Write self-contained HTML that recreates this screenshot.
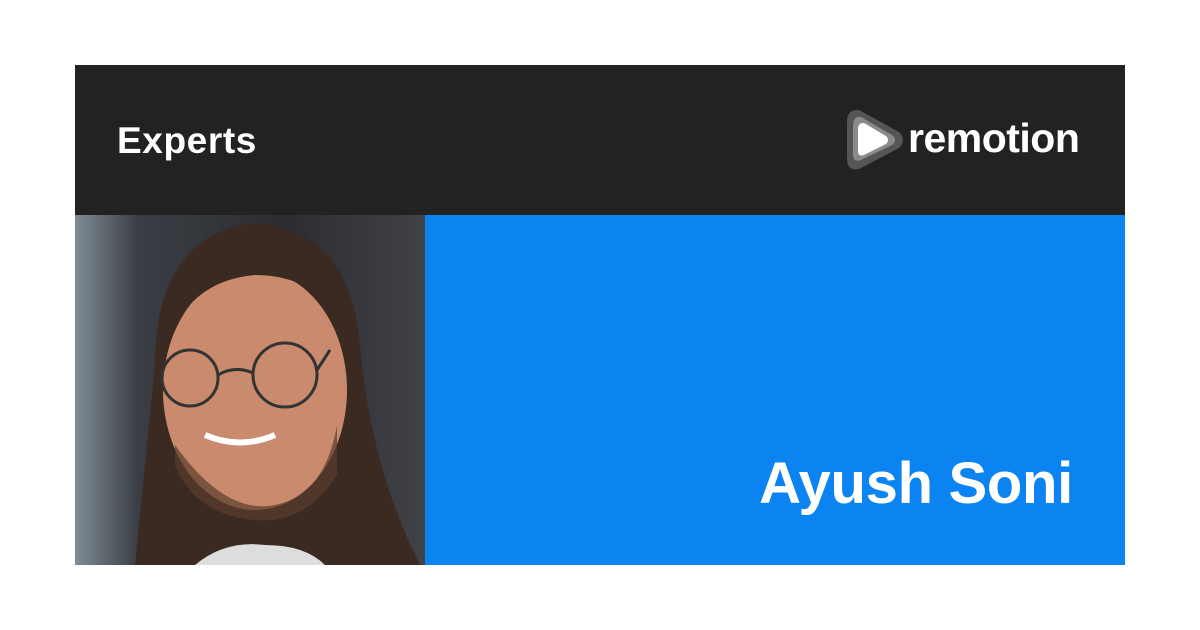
<!DOCTYPE html>
<html><head><style>
*{margin:0;padding:0}
body{width:1200px;height:630px;background:#fff;position:relative;overflow:hidden;font-family:"Liberation Sans",sans-serif}
#top{position:absolute;left:75px;top:65px;width:1050px;height:150px;background:#222}
#exp{position:absolute;left:117px;top:120px;color:#fff;font-weight:bold;font-size:37px;letter-spacing:0.6px}
#photo{position:absolute;left:75px;top:215px;width:350px;height:350px;overflow:hidden;background:linear-gradient(90deg,#7f8c95 0%,#3a3e44 18%,#2c2d31 60%,#404248 100%)}
#blue{position:absolute;left:425px;top:215px;width:700px;height:350px;background:#0b84f2}
#name{position:absolute;right:127px;top:450px;color:#fff;font-weight:bold;font-size:58px;letter-spacing:-0.3px}
#rt{position:absolute;left:908px;top:115px;color:#fff;font-weight:bold;font-size:41px;letter-spacing:-0.5px}
</style></head><body>
<div id="top"></div>
<div id="exp">Experts</div>
<svg style="position:absolute;left:845px;top:108px" width="62" height="64" viewBox="0 0 62 64">
<path d="M12 2 Q2 2 2 14 L2 50 Q2 64 14 61 L54 40 Q62 32 54 24 L14 2 Z" fill="#555"/>
<path d="M14 9 Q8 9 8 18 L8 46 Q8 55 16 52 L47 37 Q53 32 47 27 L16 9 Z" fill="#8a8a8a"/>
<path d="M18 15 Q13 15 13 21 L13 43 Q13 49 19 47 L41 36 Q45 32 41 28 L19 15 Z" fill="#fff"/>
</svg>
<div id="rt">remotion</div>
<div id="photo">
<svg width="350" height="350" viewBox="0 0 350 350">
<path d="M60 350 Q70 250 80 150 Q80 20 180 8 Q275 15 285 130 Q295 250 345 350 Z" fill="#3a2a22"/>
<ellipse cx="180" cy="175" rx="92" ry="120" fill="#c98a6e"/>
<path d="M95 120 Q110 30 190 30 Q260 35 270 110 Q240 60 180 60 Q120 65 95 120Z" fill="#3a2a22"/>
<path d="M100 230 Q150 300 200 290 Q250 280 262 210 L262 260 Q230 310 180 305 Q120 300 100 250Z" fill="#5a3d2c" opacity=".7"/>
<circle cx="115" cy="163" r="28" fill="none" stroke="#333" stroke-width="3"/>
<circle cx="210" cy="160" r="32" fill="none" stroke="#333" stroke-width="3"/>
<path d="M143 160 Q160 150 178 158 M242 155 L255 135" stroke="#333" stroke-width="3" fill="none"/>
<path d="M130 220 Q165 235 200 220" stroke="#fff" stroke-width="6" fill="none"/>
<path d="M120 350 Q150 325 190 330 Q230 330 250 350Z" fill="#ddd"/>
</svg>
</div>
<div id="blue"></div>
<div id="name">Ayush Soni</div>
</body></html>
